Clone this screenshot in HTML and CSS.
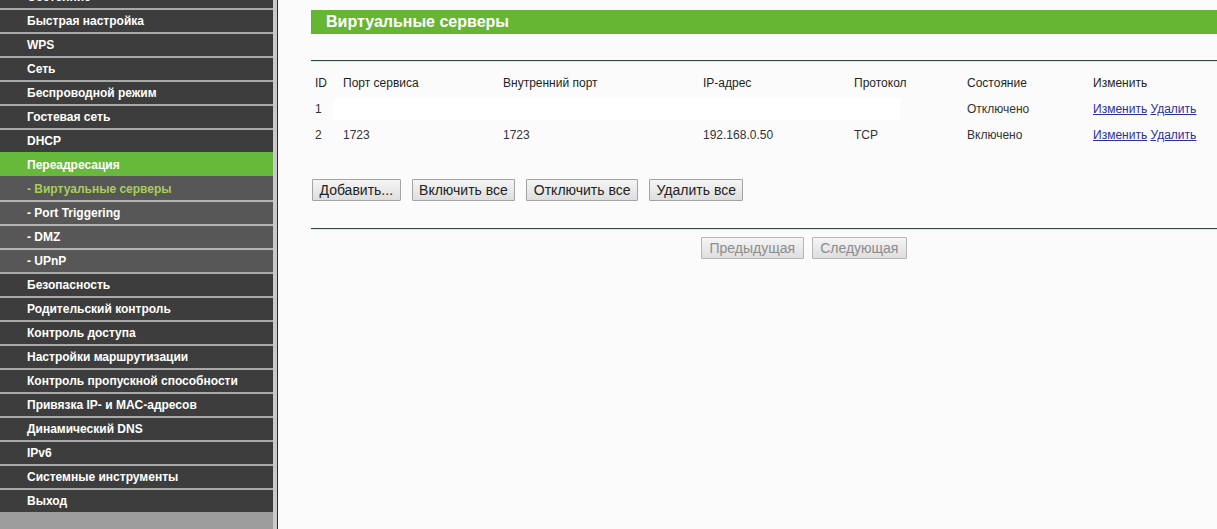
FILE: index.html
```html
<!DOCTYPE html>
<html lang="ru">
<head>
<meta charset="utf-8">
<title>Виртуальные серверы</title>
<link rel="stylesheet" href="styles.css">
</head>
<body>
<div class="page">
  <nav class="sidebar">
    <div class="item">Состояние</div>
    <div class="item">Быстрая настройка</div>
    <div class="item">WPS</div>
    <div class="item">Сеть</div>
    <div class="item">Беспроводной режим</div>
    <div class="item">Гостевая сеть</div>
    <div class="item">DHCP</div>
    <div class="item active">Переадресация</div>
    <div class="item sub current">- Виртуальные серверы</div>
    <div class="item sub">- Port Triggering</div>
    <div class="item sub">- DMZ</div>
    <div class="item sub">- UPnP</div>
    <div class="item">Безопасность</div>
    <div class="item">Родительский контроль</div>
    <div class="item">Контроль доступа</div>
    <div class="item">Настройки маршрутизации</div>
    <div class="item">Контроль пропускной способности</div>
    <div class="item">Привязка IP- и MAC-адресов</div>
    <div class="item">Динамический DNS</div>
    <div class="item">IPv6</div>
    <div class="item">Системные инструменты</div>
    <div class="item">Выход</div>
  </nav>
  <div class="divider"></div>
  <main class="main">
    <div class="title">Виртуальные серверы</div>
    <div class="rule top-rule"></div>
    <div class="table">
      <div class="cell head">ID</div>
      <div class="cell head">Порт сервиса</div>
      <div class="cell head">Внутренний порт</div>
      <div class="cell head">IP-адрес</div>
      <div class="cell head">Протокол</div>
      <div class="cell head">Состояние</div>
      <div class="cell head">Изменить</div>

      <div class="cell">1</div>
      <div class="cell blank"></div>
      <div class="cell">Отключено</div>
      <div class="cell"><a href="#">Изменить</a> <a href="#">Удалить</a></div>

      <div class="cell">2</div>
      <div class="cell">1723</div>
      <div class="cell">1723</div>
      <div class="cell">192.168.0.50</div>
      <div class="cell">TCP</div>
      <div class="cell">Включено</div>
      <div class="cell"><a href="#">Изменить</a> <a href="#">Удалить</a></div>
    </div>
    <div class="actions">
      <button class="btn">Добавить...</button>
      <button class="btn">Включить все</button>
      <button class="btn">Отключить все</button>
      <button class="btn">Удалить все</button>
    </div>
    <div class="rule bottom-rule"></div>
    <div class="pager">
      <button class="btn disabled" disabled>Предыдущая</button>
      <button class="btn disabled" disabled>Следующая</button>
    </div>
  </main>
</div>
</body>
</html>
```

FILE: styles.css
```css
html, body {
  margin: 0;
  padding: 0;
  height: 100%;
  overflow: hidden;
}
body {
  font-family: "Liberation Sans", Arial, sans-serif;
  background: #fbfbfb;
}
.page {
  display: flex;
  height: 529px;
}
.sidebar {
  width: 273px;
  flex: none;
  background: #9d9d9d;
  margin-top: -16px;
  height: 545px;
  display: flex;
  flex-direction: column;
}
.item {
  height: 22px;
  border-top: 2px solid #a9a9a9;
  background: #3d3d3d;
  color: #ffffff;
  font-size: 12px;
  font-weight: bold;
  line-height: 22px;
  padding-left: 27px;
  white-space: nowrap;
}
.item.active {
  background: #66b93a;
  border-top-color: #66b93a;
}
.item.sub {
  background: #575757;
  border-top-color: #b3b3b3;
}
.item.active + .item.sub {
  border-top-color: #575757;
}
.item.current {
  color: #a9cd5c;
}
.divider {
  width: 4px;
  flex: none;
  background: #c9c9c9;
  border-right: 1px solid #2b2b2b;
}
.main {
  flex: 1;
  padding-left: 33px;
  padding-top: 10px;
  min-width: 0;
}
.title {
  height: 24px;
  background: #66b634;
  color: #ffffff;
  font-size: 16px;
  font-weight: bold;
  line-height: 23px;
  padding-left: 15px;
}
.rule {
  height: 0;
  border-top: 1px solid #2f4a3c;
  box-shadow: 0 1px 0 #d6ece2;
}
.top-rule {
  margin-top: 26px;
}
.table {
  display: grid;
  grid-template-columns: 28px 160px 200px 151px 113px 126px 1fr;
  grid-auto-rows: 26px;
  margin-top: 9px;
  padding-left: 4px;
  font-size: 12px;
  color: #333333;
}
.cell {
  line-height: 26px;
  white-space: nowrap;
}
.cell.head {
  color: #1f1f1f;
}
.cell.blank {
  grid-column: 2 / 6;
  background: #ffffff;
  margin-left: -10px;
  width: 567px;
  height: 22px;
  align-self: center;
}
.cell a {
  color: #2b2f9e;
  text-decoration: underline;
}
.actions {
  display: flex;
  gap: 11px;
  margin-top: 31px;
  padding-left: 1px;
}
.btn {
  height: 22px;
  padding: 0 6.5px;
  border: 1px solid #a3a3a3;
  border-radius: 1px;
  background: linear-gradient(#f5f5f5, #dedede);
  font-family: "Liberation Sans", Arial, sans-serif;
  font-size: 14px;
  color: #222222;
  line-height: 20px;
}
.bottom-rule {
  margin-top: 27px;
}
.pager {
  display: flex;
  gap: 8px;
  margin-top: 8px;
  padding-left: 390px;
}
.pager .btn {
  padding: 0 7.5px;
}
.btn.disabled {
  color: #8c8c8c;
  border-color: #b5b5b5;
}
```
